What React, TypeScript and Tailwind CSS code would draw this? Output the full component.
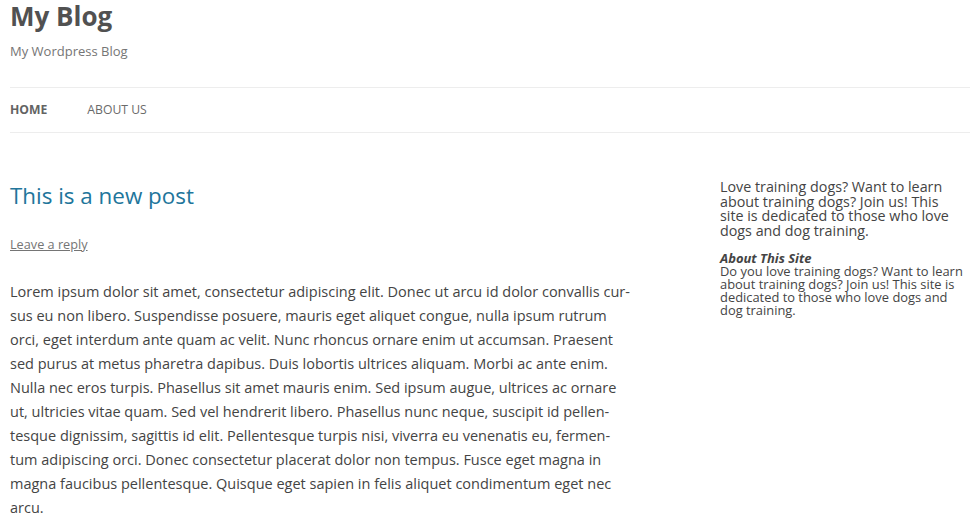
const lorem =
  'Lorem ipsum dolor sit amet, consectetur adipiscing elit. Donec ut arcu id dolor convallis cur\u00ADsus eu non libero. Suspendisse posuere, mauris eget aliquet congue, nulla ipsum rutrum orci, eget interdum ante quam ac velit. Nunc rhoncus ornare enim ut accumsan. Praesent sed purus at metus pharetra dapibus. Duis lobortis ultrices aliquam. Morbi ac ante enim. Nulla nec eros turpis. Phasellus sit amet mauris enim. Sed ipsum augue, ultrices ac ornare ut, ultricies vitae quam. Sed vel hendrerit libero. Phasellus nunc neque, suscipit id pellen\u00ADtesque dignissim, sagittis id elit. Pellentesque turpis nisi, viverra eu venenatis eu, fermen\u00ADtum adipiscing orci. Donec consectetur placerat dolor non tempus. Fusce eget magna in magna faucibus pellentesque. Quisque eget sapien in felis aliquet condimentum eget nec arcu.'

export default function App() {
  return (
    <div className="min-h-[523px] bg-white pl-[10px] pr-[2px] font-['Open_Sans',sans-serif] text-[#444]">
      <header>
        <h1 className="text-[26px] font-bold leading-[32px] text-[#515151]">My Blog</h1>
        <h2 className="mt-[7px] text-[13px] leading-[24px] text-[#757575]">My Wordpress Blog</h2>
        <nav className="mt-[24px] border-y border-[#ededed]">
          <ul className="flex gap-[40px] text-[12.2px] uppercase leading-[44px]">
            <li className="font-bold text-[#636363]">Home</li>
            <li className="text-[#6a6a6a]">About Us</li>
          </ul>
        </nav>
      </header>

      <div className="flex">
        <main className="w-[621px] pt-[51px]">
          <h1 className="text-[22.4px] leading-[24px] text-[#21759b]">This is a new post</h1>
          <div className="mt-[24px] text-[12.7px] leading-[24px] text-[#757575]">
            <a href="#" className="underline">Leave a reply</a>
          </div>
          <p className="mt-[24px] text-[14.5px] leading-[24px] text-[#444]">{lorem}</p>
        </main>

        <aside className="ml-auto w-[250px] pt-[47px] text-[#444]">
          <div className="w-[244px]">
            <p className="text-[14.3px] leading-[14.6px]">
              Love training dogs? Want to learn about training dogs? Join us! This site is dedicated to those who love dogs and dog training.
            </p>
            <h3 className="mt-[14px] text-[13px] font-bold italic leading-[13px]">About This Site</h3>
            <p className="text-[12.9px] leading-[13px]">
              Do you love training dogs? Want to learn about training dogs? Join us! This site is dedicated to those who love dogs and dog training.
            </p>
          </div>
        </aside>
      </div>
    </div>
  )
}
